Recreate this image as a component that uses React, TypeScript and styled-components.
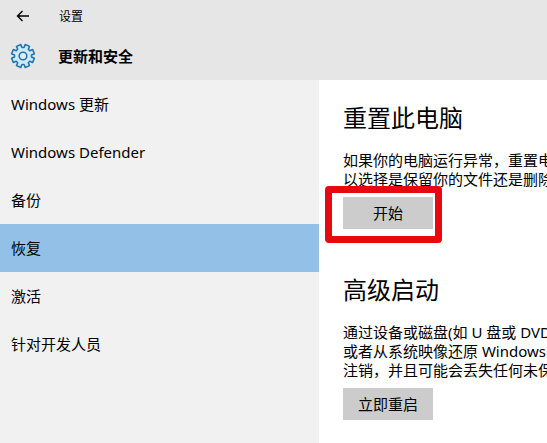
import React from 'react';
import styled, { createGlobalStyle } from 'styled-components';

const GlobalStyle = createGlobalStyle`
  *, *::before, *::after { box-sizing: border-box; }
  body {
    margin: 0;
    background: #fff;
    color: #000;
    font: 15px/19px "Noto Sans", "Noto Sans CJK SC", sans-serif;
  }
  button { font: inherit; color: inherit; }
`;

const Window = styled.div`
  min-height: 100vh;
  display: flex;
  flex-direction: column;
  overflow: hidden;
`;

const Header = styled.header`
  background: #e6e6e6;
`;

const TitleBar = styled.div`
  height: 32px;
  display: flex;
  align-items: center;
  font-size: 12px;
`;

const BackButton = styled.button`
  width: 59px;
  height: 32px;
  padding: 0 0 0 16px;
  border: 0;
  background: none;
  display: flex;
  align-items: center;
`;

const PageTitle = styled.div`
  height: 48px;
  display: flex;
  align-items: center;
  padding-left: 10px;
  gap: 22px;

  h1 {
    margin: 0;
    font-size: 15px;
    line-height: 20px;
    font-weight: 700;
  }
`;

const Body = styled.div`
  flex: 1;
  display: flex;
`;

const Sidebar = styled.nav`
  flex: 0 0 319px;
  background: #f1f1f1;
`;

const NavItem = styled.a<{ $active?: boolean }>`
  height: 48px;
  display: flex;
  align-items: center;
  padding: 0 11px;
  color: inherit;
  text-decoration: none;
  background: ${(p) => (p.$active ? '#92c0e6' : 'transparent')};
`;

const Content = styled.main`
  flex: 1;
  min-width: 0;
  padding: 22px 0 20px 24px;
  overflow: hidden;
`;

const Section = styled.section`
  & + & { margin-top: 45px; }

  h2 {
    margin: 0 0 17px;
    font-size: 24px;
    line-height: 32px;
    font-weight: 400;
  }

  p {
    margin: 0 0 8px;
    white-space: nowrap;
  }
`;

const ActionButton = styled.button`
  display: block;
  width: 90px;
  height: 32px;
  padding: 0;
  border: 0;
  background: #ccc;
`;

const Highlighted = styled.div`
  position: relative;
  width: 90px;

  &::after {
    content: "";
    position: absolute;
    inset: -11px -9px -14px -18px;
    border: 7px solid #e60a0e;
    border-radius: 4px;
    pointer-events: none;
  }
`;

const BackArrow = () => (
  <svg width="14" height="12" viewBox="0 0 14 12" fill="none" stroke="#000" strokeWidth="1.4" aria-hidden="true">
    <path d="M13 6H1.5M6.5 1L1.5 6l5 5" />
  </svg>
);

const TEETH = 8;

const gearPath = (() => {
  const step = (Math.PI * 2) / TEETH;
  const point = (radius: number, angle: number) =>
    `${(13 + radius * Math.sin(angle)).toFixed(2)} ${(13 - radius * Math.cos(angle)).toFixed(2)}`;
  const parts: string[] = [];
  for (let i = 0; i < TEETH; i += 1) {
    const a = (i + 0.5) * step;
    parts.push(point(8.6, a - 0.27), point(11.6, a - 0.2), point(11.6, a + 0.2), point(8.6, a + 0.27));
  }
  return `M${parts.join('L')}Z`;
})();

const Gear = () => (
  <svg width="26" height="26" viewBox="0 0 26 26" fill="none" stroke="#2474ab" strokeWidth="1.6" strokeLinejoin="round" aria-hidden="true">
    <path d={gearPath} fill="#cdeafa" />
    <circle cx="13" cy="13" r="3.8" fill="#e2eef5" />
  </svg>
);

const navItems = ['Windows 更新', 'Windows Defender', '备份', '恢复', '激活', '针对开发人员'];

export default function App() {
  return (
    <Window>
      <GlobalStyle />
      <Header>
        <TitleBar>
          <BackButton type="button" aria-label="返回">
            <BackArrow />
          </BackButton>
          <span>设置</span>
        </TitleBar>
        <PageTitle>
          <Gear />
          <h1>更新和安全</h1>
        </PageTitle>
      </Header>
      <Body>
        <Sidebar>
          {navItems.map((item) => (
            <NavItem key={item} href="#" $active={item === '恢复'}>
              {item}
            </NavItem>
          ))}
        </Sidebar>
        <Content>
          <Section>
            <h2>重置此电脑</h2>
            <p>
              如果你的电脑运行异常，重置电
              <br />
              以选择是保留你的文件还是删除
            </p>
            <Highlighted>
              <ActionButton type="button">开始</ActionButton>
            </Highlighted>
          </Section>
          <Section>
            <h2>高级启动</h2>
            <p>
              通过设备或磁盘(如 U 盘或 DVD
              <br />
              或者从系统映像还原 Windows
              <br />
              注销，并且可能会丢失任何未保
            </p>
            <ActionButton type="button">立即重启</ActionButton>
          </Section>
        </Content>
      </Body>
    </Window>
  );
}
